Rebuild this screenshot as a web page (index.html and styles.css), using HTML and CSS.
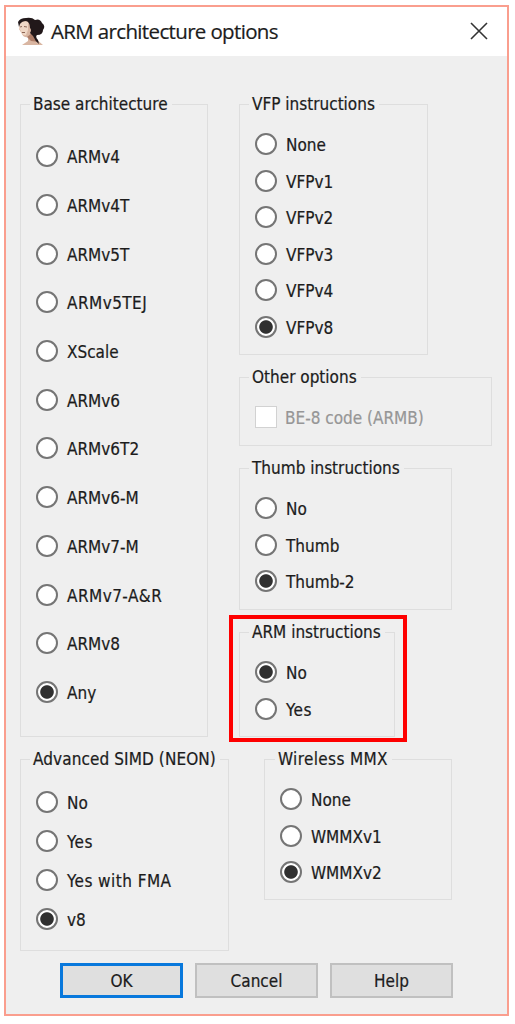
FILE: index.html
```html
<!DOCTYPE html>
<html lang="en">
<head>
<meta charset="utf-8">
<title>ARM architecture options</title>
<link rel="stylesheet" href="styles.css">
</head>
<body>
<main class="window">
  <header class="titlebar">
    <svg class="app-icon" viewBox="0 0 28 28">
      <path d="M3 5Q7 2 12 4L16 10L16 17L19 22L26 28H5L11 24L11 20Q7 21 5 17L2 12Z" fill="#d9b6a2"/>
      <path d="M3 6Q7 3 11 5L11 13L9 18Q6 19 5 16L2 11Z" fill="#f0d8c6"/>
      <path d="M10 20L15 16L18 22L22 25L14 24Z" fill="#ad7d68"/>
      <path d="M1 5Q3 1 9 1Q15 0 18 3Q23 1 25 6Q29 9 26 13Q26 18 20 18Q18 20 21 23L22 27Q18 24 16 19L13 16Q15 13 13 11Q13 5 9 4Q5 4 3 7L2 10Z" fill="#21181a"/>
      <path d="M3 10L5 9.500M7 9.500L10 10M5 15.500H8" stroke="#8d6656" fill="none"/>
    </svg>
    <h1>ARM architecture options</h1>
    <svg class="close" viewBox="0 0 18 18"><path d="M1 1L17 17M17 1L1 17" fill="none" stroke="#333" stroke-width="1.6"/></svg>
  </header>
  <div class="content">
    <div class="column">
      <section class="group base">
        <h2>Base architecture</h2>
        <div class="rows">
          <label><i class="radio"></i><span>ARMv4</span></label>
          <label><i class="radio"></i><span>ARMv4T</span></label>
          <label><i class="radio"></i><span>ARMv5T</span></label>
          <label><i class="radio"></i><span class="wide">ARMv5TEJ</span></label>
          <label><i class="radio"></i><span>XScale</span></label>
          <label><i class="radio"></i><span>ARMv6</span></label>
          <label><i class="radio"></i><span>ARMv6T2</span></label>
          <label><i class="radio"></i><span>ARMv6-M</span></label>
          <label><i class="radio"></i><span>ARMv7-M</span></label>
          <label><i class="radio"></i><span class="wide">ARMv7-A&amp;R</span></label>
          <label><i class="radio"></i><span>ARMv8</span></label>
          <label><i class="radio on"></i><span>Any</span></label>
        </div>
      </section>
      <section class="group neon">
        <h2>Advanced SIMD (NEON)</h2>
        <div class="rows">
          <label><i class="radio"></i><span>No</span></label>
          <label><i class="radio"></i><span class="wide">Yes</span></label>
          <label><i class="radio"></i><span class="wide">Yes with FMA</span></label>
          <label><i class="radio on"></i><span>v8</span></label>
        </div>
      </section>
    </div>
    <div class="column">
      <section class="group vfp">
        <h2>VFP instructions</h2>
        <div class="rows">
          <label><i class="radio"></i><span>None</span></label>
          <label><i class="radio"></i><span>VFPv1</span></label>
          <label><i class="radio"></i><span>VFPv2</span></label>
          <label><i class="radio"></i><span>VFPv3</span></label>
          <label><i class="radio"></i><span>VFPv4</span></label>
          <label><i class="radio on"></i><span>VFPv8</span></label>
        </div>
      </section>
      <section class="group other">
        <h2>Other options</h2>
        <div class="rows">
          <label class="disabled"><i class="check"></i><span>BE-8 code (ARMB)</span></label>
        </div>
      </section>
      <section class="group thumb">
        <h2>Thumb instructions</h2>
        <div class="rows">
          <label><i class="radio"></i><span>No</span></label>
          <label><i class="radio"></i><span>Thumb</span></label>
          <label><i class="radio on"></i><span>Thumb-2</span></label>
        </div>
      </section>
      <div class="highlight">
        <section class="group arm">
          <h2>ARM instructions</h2>
          <div class="rows">
            <label><i class="radio on"></i><span>No</span></label>
            <label><i class="radio"></i><span class="wide">Yes</span></label>
          </div>
        </section>
      </div>
      <section class="group wireless">
        <h2>Wireless MMX</h2>
        <div class="rows">
          <label><i class="radio"></i><span>None</span></label>
          <label><i class="radio"></i><span>WMMXv1</span></label>
          <label><i class="radio on"></i><span>WMMXv2</span></label>
        </div>
      </section>
    </div>
  </div>
  <footer class="buttons">
    <button class="default">OK</button>
    <button>Cancel</button>
    <button>Help</button>
  </footer>
</main>
</body>
</html>
```
FILE: styles.css
```css
* { box-sizing: border-box; }
body {
  margin: 0;
  background: #fff;
  color: #1c1c1c;
  font: 17px/22px "DejaVu Sans Condensed", "DejaVu Sans", sans-serif;
  font-stretch: condensed;
  -webkit-text-stroke: .2px;
}
.window {
  width: 505px;
  height: 1011px;
  margin: 5px 0 0 4px;
  border: 2px solid #fa9e8e;
  background: #efefef;
}
.titlebar {
  display: flex;
  align-items: center;
  height: 49px;
  padding: 0 19px 0 11px;
  background: #fff;
}
.app-icon { width: 28px; height: 28px; margin-top: -2px; }
h1 {
  flex: 1;
  margin: -2px 0 0 6px;
  font: 20.5px/28px "Open Sans", sans-serif;
  letter-spacing: -.65px;
  white-space: nowrap;
}
.close { width: 18px; height: 18px; margin-top: -2px; }
.content {
  display: flex;
  height: 907px;
  padding: 48px 0 0 14px;
}
.column { width: 219px; }
.group { border: 1px solid #dedede; }
h2 {
  display: table;
  height: 22px;
  margin: -12px 0 0 9px;
  padding: 0 4px 0 3px;
  background: #efefef;
  font-size: 17px;
  font-weight: 400;
  line-height: 22px;
  white-space: nowrap;
}
.rows { padding: 10.9px 0 0 15px; }
label {
  display: flex;
  align-items: center;
  gap: 9px;
  height: 36.5px;
  white-space: nowrap;
}
label span { padding-top: 2px; }
.wide { letter-spacing: .45px; }
.radio {
  flex: none;
  width: 22px;
  height: 22px;
  border: 2px solid #757575;
  border-radius: 50%;
  background: #fff;
}
.on { background: radial-gradient(circle, #303030 6.3px, #fff 7.2px); }
.check {
  width: 22px;
  height: 22px;
  border: 1px solid #d2d2d2;
  background: #fff;
}
.disabled { gap: 8px; color: #969696; }
.base { width: 188px; height: 633px; }
.base .rows { padding-top: 17px; }
.base label { height: 48.7px; }
.neon { width: 209px; height: 192px; margin-top: 22px; }
.neon h2 { letter-spacing: .1px; }
.neon .rows { padding-top: 12px; }
.neon label { height: 39.1px; }
.vfp { width: 189px; height: 251px; }
.other { width: 253px; height: 69px; margin-top: 22px; }
.thumb { width: 213px; height: 142px; margin-top: 22px; }
.highlight {
  width: 178px;
  height: 127px;
  margin: 5px 0 0 -10px;
  padding: 13px 0 0 6px;
  border: 4px solid #fe0000;
}
.arm { width: 156px; height: 105px; }
.wireless { width: 188px; height: 141px; margin: 17px 0 0 25px; }
.wireless h2 { margin-left: 10px; letter-spacing: .35px; }
.buttons {
  display: flex;
  gap: 12px;
  padding-left: 54px;
}
button {
  width: 123px;
  height: 35px;
  padding: 0;
  border: 2px solid #c0c0c0;
  background: #dfdfdf;
  color: #1c1c1c;
  font: inherit;
}
.default { border: 3px solid #0878dc; }
```
